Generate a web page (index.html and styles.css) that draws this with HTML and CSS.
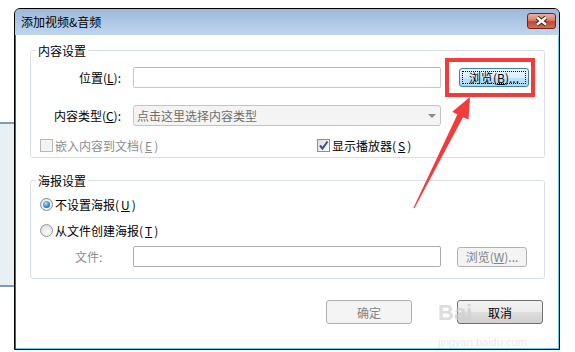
FILE: index.html
```html
<!DOCTYPE html>
<html lang="zh-CN">
<head>
    <meta charset="UTF-8">
    <title>添加视频&amp;音频</title>
    <link rel="stylesheet" href="styles.css">
</head>
<body>
    <div class="desktop">
        <div class="side-panel"></div>

        <div class="dialog">
            <div class="titlebar">
                <span class="title">添加视频&amp;音频</span>
                <button class="close-btn">
                    <svg width="27" height="14" viewBox="0 0 27 14">
                        <path d="M9 3.5 L18 10.5 M18 3.5 L9 10.5" stroke="#4a1c14" stroke-width="4.4" fill="none"/>
                        <path d="M9 3.5 L18 10.5 M18 3.5 L9 10.5" stroke="#fff" stroke-width="2.4" fill="none"/>
                    </svg>
                </button>
            </div>

            <div class="dialog-body">
                <div class="group group-content">
                    <div class="group-title">内容设置</div>
                    <div class="row row-location">
                        <label class="field-label">位置(<u>L</u>):</label>
                        <div class="textbox"></div>
                        <button class="btn btn-focus btn-browse"><span class="focus-rect">浏览(<u>B</u>)...</span></button>
                    </div>
                    <div class="row row-type">
                        <label class="field-label">内容类型(<u>C</u>):</label>
                        <div class="combo">
                            <span>点击这里选择内容类型</span>
                            <span class="combo-arrow"></span>
                        </div>
                    </div>
                    <div class="row row-checks">
                        <span class="check-item check-embed disabled"><span class="checkbox"></span>嵌入内容到文档(<u>E</u>)</span>
                        <span class="check-item">
                            <span class="checkbox checked">
                                <svg width="11" height="11" viewBox="0 0 11 11"><path d="M2 5.5 L4.5 8.5 L9.5 1.5" stroke="#3a4f90" stroke-width="2" fill="none"/></svg>
                            </span>显示播放器(<u>S</u>)
                        </span>
                    </div>
                </div>

                <div class="group group-poster">
                    <div class="group-title">海报设置</div>
                    <div class="row row-radio first">
                        <span class="radio selected"><span class="radio-dot"></span></span>不设置海报(<u>U</u>)
                    </div>
                    <div class="row row-radio">
                        <span class="radio"></span>从文件创建海报(<u>T</u>)
                    </div>
                    <div class="row row-file">
                        <label class="field-label file-label">文件:</label>
                        <div class="textbox textbox-dim"></div>
                        <button class="btn btn-browse-file" disabled>浏览(<u>W</u>)...</button>
                    </div>
                </div>

                <div class="dialog-buttons">
                    <button class="btn btn-wide" disabled>确定</button>
                    <button class="btn btn-wide">取消</button>
                </div>
            </div>
        </div>
    </div>

    <!-- screenshot annotation -->
    <svg class="annotation" width="575" height="352" viewBox="0 0 575 352">
        <rect x="447" y="60" width="86" height="35" fill="none" stroke="#f23b3b" stroke-width="4"/>
        <polygon fill="#f23b3b" points="470,97 468.5,119.5 463,117.2 414.5,208.3 413.5,207.7 457.4,114.6 452.3,111.8"/>
    </svg>

    <div class="watermark">
        <div class="wm-logo">Bai</div>
        <div class="wm-url">jingyan.baidu.com</div>
    </div>
</body>
</html>
```

FILE: styles.css
```css
* {
    margin: 0;
    padding: 0;
    box-sizing: border-box;
}

body {
    width: 575px;
    height: 352px;
    overflow: hidden;
    position: relative;
    background: #fff;
    color: #000;
    font-family: "Noto Sans CJK SC", "DejaVu Sans", sans-serif;
    font-size: 12px;
}

u {
    text-decoration: underline;
    text-underline-offset: 1px;
}

.desktop {
    display: flex;
    align-items: flex-start;
}

.side-panel {
    width: 14px;
    height: 165px;
    margin-top: 122px;
    background: #e9f0f3;
    border-top: 2px solid #7d9cb6;
    border-bottom: 2px solid #7d9cb6;
}

.dialog {
    width: 546px;
    height: 342px;
    margin-top: 8px;
    border: 1px solid #000;
    border-radius: 6px 6px 0 0;
    background: #fff;
    box-shadow: inset 1px 0 0 #3a6690, inset -1px -1px 0 #63cbec;
    display: flex;
    flex-direction: column;
    overflow: hidden;
}

.titlebar {
    height: 26px;
    flex-shrink: 0;
    display: flex;
    justify-content: space-between;
    align-items: flex-start;
    padding: 0 3px 0 6px;
    background: linear-gradient(#9cb8da, #bfd6ee);
}

.title {
    line-height: 26px;
}

.close-btn {
    width: 29px;
    height: 16px;
    margin-top: 4px;
    border: 1px solid #6e2419;
    border-radius: 3px;
    background: linear-gradient(#eab0a2, #d9806e 45%, #c4442f 55%, #d0705a);
    display: flex;
    align-items: center;
    justify-content: center;
}

.dialog-body {
    padding: 15px 14px 0 15px;
}

.group {
    border: 1px solid #d5dfe5;
    border-radius: 3px;
}

.group-content {
    height: 108px;
}

.group-poster {
    height: 99px;
    margin-top: 22px;
}

.group-title {
    width: fit-content;
    margin: -8px 0 0 5px;
    padding: 0 2px;
    line-height: 16px;
    background: #fff;
}

.row {
    display: flex;
    align-items: center;
}

.field-label {
    width: 90px;
    margin-right: 12px;
    text-align: right;
}

.row-location {
    height: 21px;
    margin-top: 8px;
}

.textbox {
    width: 308px;
    height: 21px;
    border: 1px solid #c4c8ce;
    border-top-color: #b3b7bd;
    border-radius: 2px;
    background: #fff;
}

.textbox-dim {
    border-color: #adadad;
}

.btn {
    font: inherit;
    color: #000;
    border: 1px solid #707070;
    border-radius: 3px;
    background: linear-gradient(#f2f2f2, #ebebeb 50%, #dddddd 51%, #cfcfcf);
    display: flex;
    align-items: center;
    justify-content: center;
}

.btn:disabled {
    color: #838383;
    border-color: #adb2b5;
    background: #f4f4f4;
}

.btn-focus {
    border-color: #3c7fb1;
    background: linear-gradient(#eaf6fd, #d9f0fc 50%, #bee6fd 51%, #a7d9f5);
    padding: 2px;
}

.focus-rect {
    flex: 1;
    align-self: stretch;
    display: flex;
    align-items: center;
    justify-content: center;
    border: 1px dotted #000;
}

.btn-browse {
    width: 70px;
    height: 19px;
    margin-left: 18px;
}

.row-type {
    height: 21px;
    margin-top: 17px;
}

.combo {
    width: 308px;
    height: 21px;
    padding: 0 4px 0 3px;
    border: 1px solid #c3c3c3;
    border-radius: 3px;
    background: #f4f4f4;
    color: #6d6d6d;
    display: flex;
    align-items: center;
    justify-content: space-between;
}

.combo-arrow {
    border-left: 4px solid transparent;
    border-right: 4px solid transparent;
    border-top: 4px solid #8c8c8c;
}

.row-checks {
    height: 13px;
    margin-top: 13px;
    padding-left: 9px;
}

.check-item {
    display: flex;
    align-items: center;
    gap: 2px;
}

.check-embed {
    width: 277px;
}

.disabled {
    color: #8d8d8d;
}

.checkbox {
    width: 13px;
    height: 13px;
    border: 1px solid #8e8f8f;
    background: linear-gradient(135deg, #dcdcdc, #fdfdfd);
    display: flex;
    align-items: center;
    justify-content: center;
}

.disabled .checkbox {
    border-color: #b8b8b8;
    background: #f4f4f4;
}

.row-radio {
    height: 16px;
    margin-top: 10px;
    padding-left: 9px;
    gap: 2px;
}

.row-radio.first {
    margin-top: 7px;
}

.radio {
    width: 13px;
    height: 13px;
    border-radius: 50%;
    border: 1px solid #979797;
    background: radial-gradient(circle at 60% 65%, #fbfbfb, #d6d6d6);
    display: flex;
    align-items: center;
    justify-content: center;
}

.radio.selected {
    border-color: #8a8a8a;
    background: radial-gradient(circle, #fff, #e2e2e2);
}

.radio-dot {
    width: 7px;
    height: 7px;
    border-radius: 50%;
    background: radial-gradient(circle at 40% 35%, #b7e3fb, #2a84c4 60%, #144e84);
}

.row-file {
    height: 21px;
    margin-top: 8px;
}

.file-label {
    padding-left: 44px;
    text-align: left;
    color: #8d8d8d;
}

.btn-browse-file {
    width: 70px;
    height: 20px;
    margin-left: 16px;
}

.dialog-buttons {
    display: flex;
    justify-content: flex-end;
    gap: 45px;
    margin-top: 21px;
    margin-right: 2px;
}

.btn-wide {
    width: 86px;
    height: 24px;
}

.annotation {
    position: absolute;
    left: 0;
    top: 0;
    pointer-events: none;
}

.watermark {
    position: absolute;
    left: 438px;
    top: 300px;
    color: #cfcfcf;
    opacity: 0.7;
    pointer-events: none;
    font-family: "Liberation Sans", sans-serif;
}

.wm-logo {
    font-size: 22px;
    font-weight: bold;
    line-height: 26px;
}

.wm-url {
    font-size: 11px;
    line-height: 14px;
    margin-top: 9px;
    color: #e0e0e0;
}
```
